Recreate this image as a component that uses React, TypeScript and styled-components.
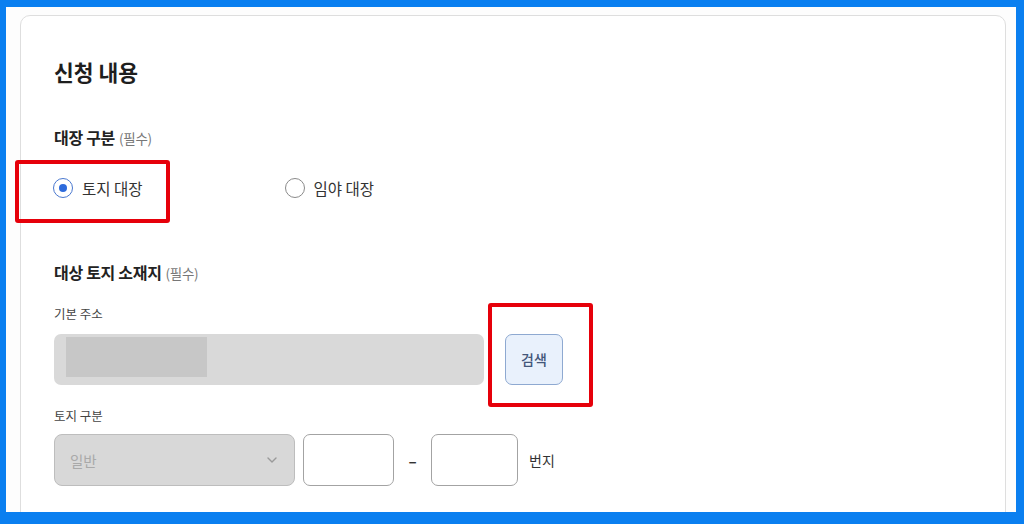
import styled, { createGlobalStyle } from "styled-components";

const Global = createGlobalStyle`
  html, body {
    margin: 0;
    padding: 0;
    background: #ffffff;
  }
  body {
    font-family: "Noto Sans CJK KR", "Noto Sans", sans-serif;
    color: #222;
  }
`;

const S = {
  Frame: styled.div`
    box-sizing: border-box;
    width: 1024px;
    height: 524px;
    border-style: solid;
    border-color: #0a7ff0;
    border-width: 7px 8px 12px 6px;
    background: #fdfdfd;
    overflow: hidden;
  `,
  Card: styled.section`
    box-sizing: border-box;
    margin: 8px 10px 0 14px;
    height: 560px;
    padding: 42px 33px 0;
    background: #fff;
    border: 1px solid #dedede;
    border-radius: 10px;
  `,
  Title: styled.h2`
    margin: 0;
    font-size: 21.5px;
    line-height: 28px;
    font-weight: 700;
    color: #1e1e1e;
  `,
  GroupLabel: styled.div<{ $top: number }>`
    margin-top: ${(p) => p.$top}px;
    font-size: 16px;
    line-height: 20px;
    font-weight: 700;
    letter-spacing: -0.3px;
    color: #222;
  `,
  Required: styled.span`
    margin-left: 4px;
    font-size: 13.5px;
    font-weight: 400;
    color: #777;
  `,
  RadioRow: styled.div`
    display: flex;
    margin-top: 28px;
    margin-left: -1px;
    height: 24px;
  `,
  Highlight: styled.div<{ $t: number; $l: number; $w: number; $h: number }>`
    position: relative;
    display: flex;
    &::after {
      content: "";
      position: absolute;
      top: ${(p) => p.$t}px;
      left: ${(p) => p.$l}px;
      width: ${(p) => p.$w}px;
      height: ${(p) => p.$h}px;
      box-sizing: border-box;
      border: 4.5px solid #e6000a;
      border-radius: 3px;
      pointer-events: none;
    }
  `,
  Option: styled.label<{ $offset?: number }>`
    display: flex;
    align-items: center;
    gap: 9px;
    margin-left: ${(p) => p.$offset ?? 0}px;
    font-size: 15.5px;
    color: #333;
  `,
  Radio: styled.span<{ $checked?: boolean }>`
    box-sizing: border-box;
    width: 20px;
    height: 20px;
    border-radius: 50%;
    border: 1.5px solid ${(p) => (p.$checked ? "#4a78cf" : "#8a8a8a")};
    display: flex;
    align-items: center;
    justify-content: center;
    &::after {
      content: "";
      width: 8px;
      height: 8px;
      border-radius: 50%;
      background: ${(p) => (p.$checked ? "#2e6bdc" : "transparent")};
    }
  `,
  FieldLabel: styled.div<{ $top: number }>`
    margin-top: ${(p) => p.$top}px;
    font-size: 12.5px;
    line-height: 18px;
    color: #444;
  `,
  Row: styled.div<{ $top: number }>`
    display: flex;
    align-items: center;
    margin-top: ${(p) => p.$top}px;
    height: 52px;
  `,
  AddressBox: styled.div`
    box-sizing: border-box;
    width: 430px;
    height: 51px;
    padding: 3px 12px 8px;
    background: #d9d9d9;
    border-radius: 7px;
    display: flex;
  `,
  Masked: styled.div`
    width: 141px;
    background: #c7c7c7;
  `,
  SearchButton: styled.button`
    box-sizing: border-box;
    margin-left: 21px;
    width: 58px;
    height: 51px;
    background: #e9f1fc;
    border: 1.5px solid #8ea9d1;
    border-radius: 7px;
    font-family: inherit;
    font-size: 14px;
    font-weight: 500;
    color: #44577a;
    padding: 0;
  `,
  Select: styled.div`
    box-sizing: border-box;
    width: 241px;
    height: 52px;
    padding: 0 17px 0 15px;
    display: flex;
    align-items: center;
    justify-content: space-between;
    background: #d8d8d8;
    border: 1.5px solid #bdbdbd;
    border-radius: 8px;
    font-size: 14.5px;
    color: #a9a9a9;
  `,
  TextBox: styled.div<{ $w: number; $gap?: number }>`
    box-sizing: border-box;
    width: ${(p) => p.$w}px;
    height: 52px;
    margin-left: ${(p) => p.$gap ?? 0}px;
    background: #fff;
    border: 1.5px solid #a3a3a3;
    border-radius: 7px;
  `,
  Dash: styled.span`
    width: 37px;
    text-align: center;
    font-size: 15px;
    font-weight: 700;
    color: #333;
  `,
  Suffix: styled.span`
    margin-left: 11px;
    font-size: 14px;
    color: #333;
  `,
};

function Chevron() {
  return (
    <svg width="10" height="6" viewBox="0 0 10 6" fill="none">
      <path d="M1 1l4 4 4-4" stroke="#9a9a9a" strokeWidth="1.4" strokeLinecap="round" strokeLinejoin="round" />
    </svg>
  );
}

export default function App() {
  return (
    <>
      <Global />
      <S.Frame>
        <S.Card>
          <S.Title>신청 내용</S.Title>

          <S.GroupLabel $top={41}>
            대장 구분<S.Required>(필수)</S.Required>
          </S.GroupLabel>
          <S.RadioRow>
            <S.Highlight $t={-16} $l={-38} $w={155} $h={63}>
              <S.Option>
                <S.Radio $checked />
                토지 대장
              </S.Option>
            </S.Highlight>
            <S.Option $offset={142}>
              <S.Radio />
              임야 대장
            </S.Option>
          </S.RadioRow>

          <S.GroupLabel $top={62}>
            대상 토지 소재지<S.Required>(필수)</S.Required>
          </S.GroupLabel>

          <S.FieldLabel $top={22}>기본 주소</S.FieldLabel>
          <S.Row $top={10}>
            <S.AddressBox>
              <S.Masked />
            </S.AddressBox>
            <S.Highlight $t={-31} $l={4} $w={105} $h={104}>
              <S.SearchButton>검색</S.SearchButton>
            </S.Highlight>
          </S.Row>

          <S.FieldLabel $top={22}>토지 구분</S.FieldLabel>
          <S.Row $top={9}>
            <S.Select>
              일반
              <Chevron />
            </S.Select>
            <S.TextBox $w={91} $gap={8} />
            <S.Dash>–</S.Dash>
            <S.TextBox $w={87} />
            <S.Suffix>번지</S.Suffix>
          </S.Row>
        </S.Card>
      </S.Frame>
    </>
  );
}
